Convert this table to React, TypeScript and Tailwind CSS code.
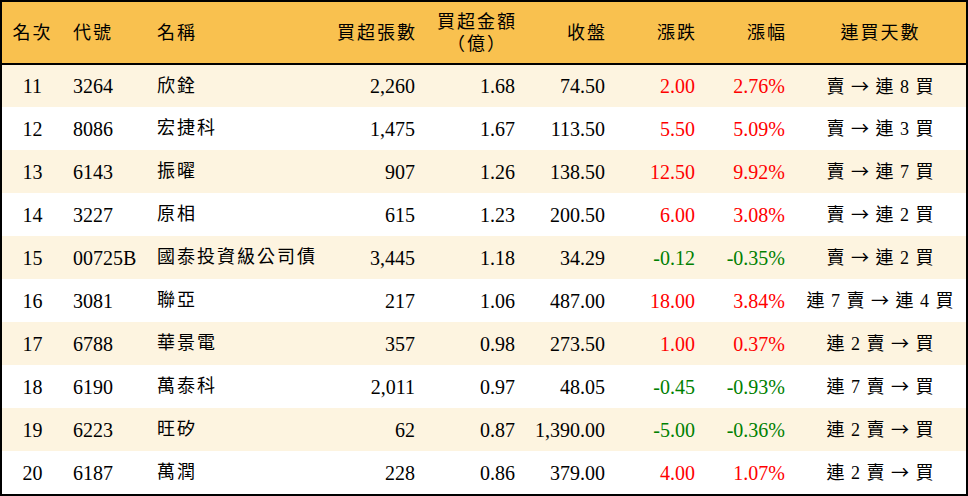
import React from "react";

type Row = {
  rank: number;
  code: string;
  name: string;
  lots: string;
  amount: string;
  close: string;
  change: string;
  pct: string;
  streak: string[];
};

const ROWS: Row[] = [
  { rank: 11, code: "3264", name: "欣銓", lots: "2,260", amount: "1.68", close: "74.50", change: "2.00", pct: "2.76%", streak: ["賣", "連 8 買"] },
  { rank: 12, code: "8086", name: "宏捷科", lots: "1,475", amount: "1.67", close: "113.50", change: "5.50", pct: "5.09%", streak: ["賣", "連 3 買"] },
  { rank: 13, code: "6143", name: "振曜", lots: "907", amount: "1.26", close: "138.50", change: "12.50", pct: "9.92%", streak: ["賣", "連 7 買"] },
  { rank: 14, code: "3227", name: "原相", lots: "615", amount: "1.23", close: "200.50", change: "6.00", pct: "3.08%", streak: ["賣", "連 2 買"] },
  { rank: 15, code: "00725B", name: "國泰投資級公司債", lots: "3,445", amount: "1.18", close: "34.29", change: "-0.12", pct: "-0.35%", streak: ["賣", "連 2 買"] },
  { rank: 16, code: "3081", name: "聯亞", lots: "217", amount: "1.06", close: "487.00", change: "18.00", pct: "3.84%", streak: ["連 7 賣", "連 4 買"] },
  { rank: 17, code: "6788", name: "華景電", lots: "357", amount: "0.98", close: "273.50", change: "1.00", pct: "0.37%", streak: ["連 2 賣", "買"] },
  { rank: 18, code: "6190", name: "萬泰科", lots: "2,011", amount: "0.97", close: "48.05", change: "-0.45", pct: "-0.93%", streak: ["連 7 賣", "買"] },
  { rank: 19, code: "6223", name: "旺矽", lots: "62", amount: "0.87", close: "1,390.00", change: "-5.00", pct: "-0.36%", streak: ["連 2 賣", "買"] },
  { rank: 20, code: "6187", name: "萬潤", lots: "228", amount: "0.86", close: "379.00", change: "4.00", pct: "1.07%", streak: ["連 2 賣", "買"] },
];

// column widths add up to the 964px inside the border
const COLS = [61, 84, 178, 100, 100, 90, 90, 90, 171];

export default function App() {
  return (
    <div className="w-[968px] h-[496px] bg-white">
      <div className="w-[968px] border-2 border-black font-['Liberation_Serif','Noto_Sans_CJK_TC',serif] text-[20px] text-black">
        <table className="w-[964px] table-fixed border-collapse">
          <colgroup>
            {COLS.map((w, i) => (
              <col key={i} style={{ width: w }} />
            ))}
          </colgroup>
          <thead>
            <tr className="h-[62px] bg-[#F9C14F] border-b-2 border-black text-[18px] leading-[22px] tracking-[2px]">
              <th className="font-normal text-center">名次</th>
              <th className="font-normal text-left pl-[10px]">代號</th>
              <th className="font-normal text-left pl-[10px]">名稱</th>
              <th className="font-normal text-right pr-[8px]">買超張數</th>
              <th className="font-normal text-right pr-[8px]">
                <span className="inline-block text-center">
                  買超金額
                  <br />
                  （億）
                </span>
              </th>
              <th className="font-normal text-right pr-[8px]">收盤</th>
              <th className="font-normal text-right pr-[8px]">漲跌</th>
              <th className="font-normal text-right pr-[8px]">漲幅</th>
              <th className="font-normal text-center">連買天數</th>
            </tr>
          </thead>
          <tbody>
            {ROWS.map((r, i) => {
              const up = !r.change.startsWith("-");
              const tone = up ? "text-[#FF0000]" : "text-[#008000]";
              return (
                <tr
                  key={r.rank}
                  className={i % 2 === 0 ? "h-[43px] bg-[#FDF4E0]" : "h-[43px] bg-white"}
                >
                  <td className="text-center">{r.rank}</td>
                  <td className="text-left pl-[10px]">{r.code}</td>
                  <td className="text-left pl-[10px] text-[18px] tracking-[2px]">{r.name}</td>
                  <td className="text-right pr-[10px]">{r.lots}</td>
                  <td className="text-right pr-[10px]">{r.amount}</td>
                  <td className="text-right pr-[10px]">{r.close}</td>
                  <td className={`text-right pr-[10px] ${tone}`}>{r.change}</td>
                  <td className={`text-right pr-[10px] ${tone}`}>{r.pct}</td>
                  <td className="text-center whitespace-pre text-[18px] tracking-[1px]">
                    {r.streak[0]}{" "}
                    <span className="font-['Noto_Sans_CJK_TC',sans-serif]">→</span>
                    {" "}{r.streak[1]}
                  </td>
                </tr>
              );
            })}
          </tbody>
        </table>
      </div>
    </div>
  );
}
